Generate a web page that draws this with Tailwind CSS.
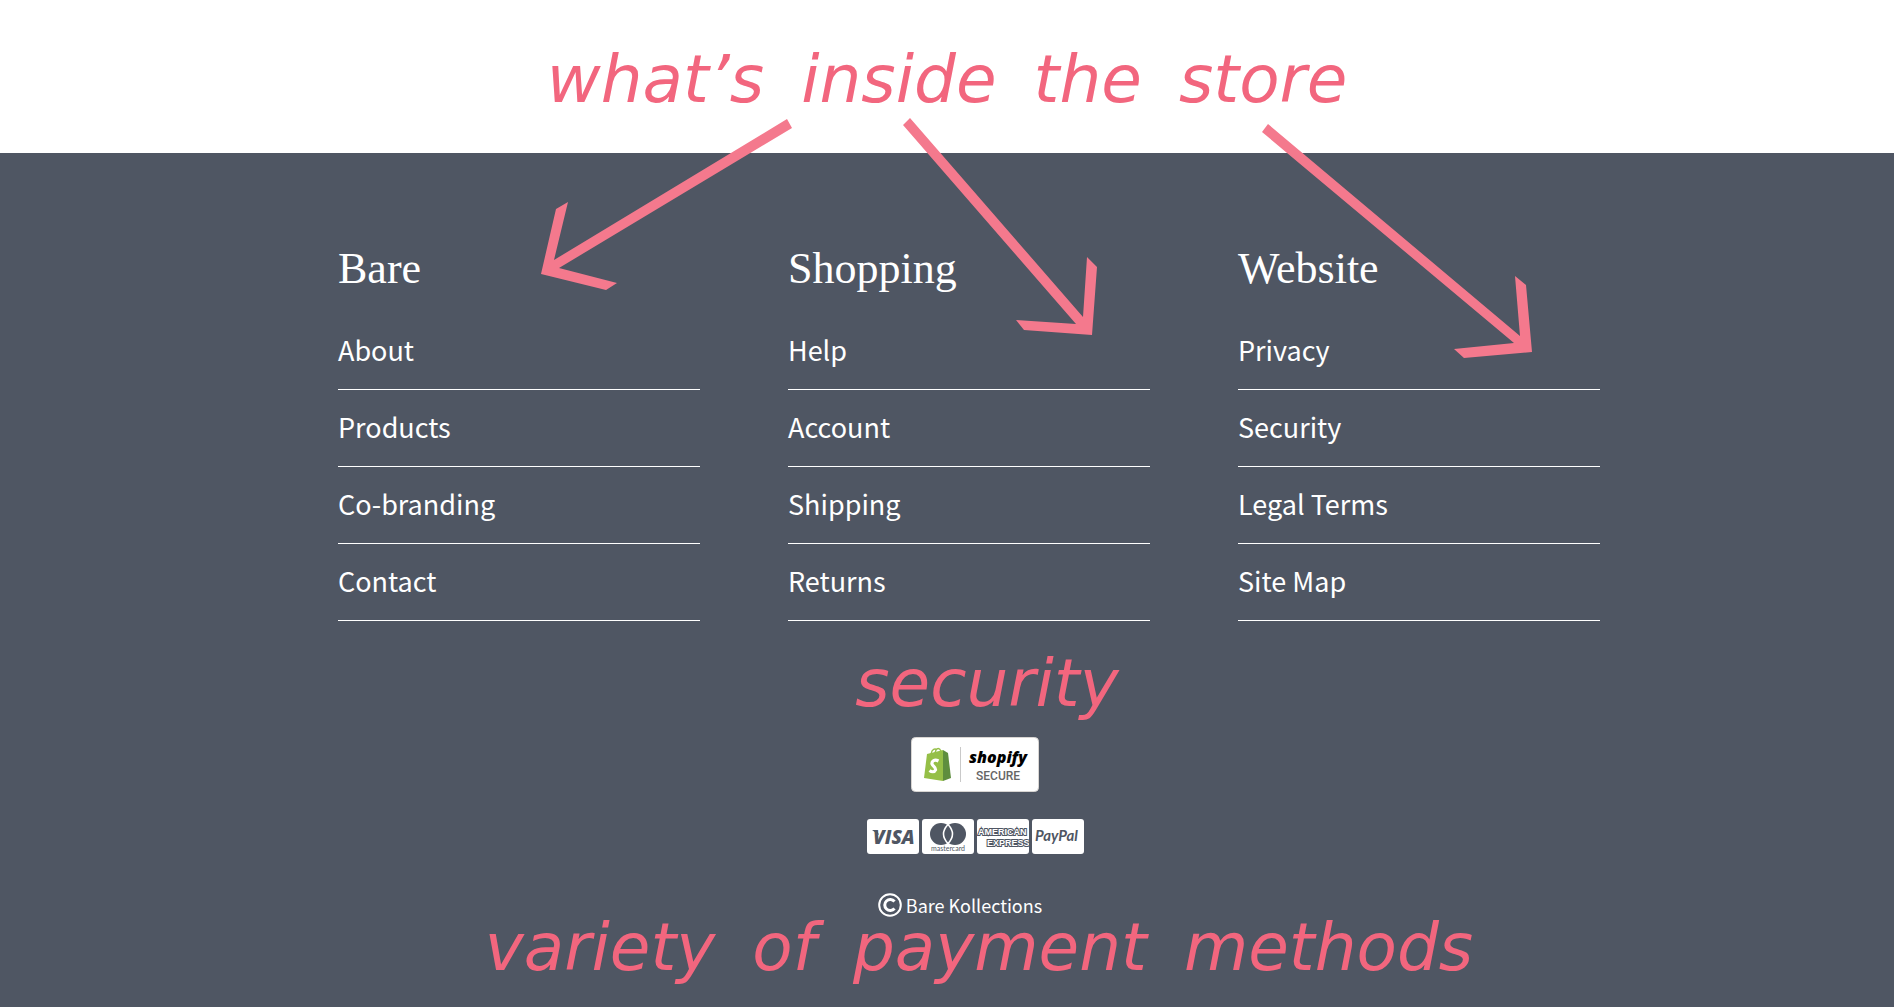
<!DOCTYPE html>
<html lang="en">
<head>
<meta charset="utf-8">
<title>Bare Kollections</title>
<script src="https://cdn.jsdelivr.net/npm/@tailwindcss/browser@4"></script>
</head>
<body class="min-h-screen overflow-x-hidden bg-[#4f5663] font-['Noto_Sans_CJK_SC',sans-serif] text-white">
<header class="flex h-[153px] justify-center bg-white pt-9">
  <h1 class="font-['DejaVu_Sans',sans-serif] text-[66px] leading-[88px] text-[#f2667e] italic"><span class="mr-4">what’s</span> <span class="mr-4">inside</span> <span class="mr-4">the</span> <span>store</span></h1>
</header>
<footer>
  <div class="pl-11">
    <div class="relative mx-auto max-w-[1262px]">
      <nav class="grid grid-cols-3 gap-x-[88px] pt-[84px]">
        <section>
          <h2 class="font-['Liberation_Serif',serif] text-[44px] leading-[64px]">Bare</h2>
          <ul class="mt-3 text-[27px] leading-[42px]">
            <li class="border-b border-white pt-4 pb-[18px]"><a href="#">About</a></li>
            <li class="border-b border-white pt-4 pb-[18px]"><a href="#">Products</a></li>
            <li class="border-b border-white pt-4 pb-[18px]"><a href="#">Co-branding</a></li>
            <li class="border-b border-white pt-4 pb-[18px]"><a href="#">Contact</a></li>
          </ul>
        </section>
        <section>
          <h2 class="font-['Liberation_Serif',serif] text-[44px] leading-[64px]">Shopping</h2>
          <ul class="mt-3 text-[27px] leading-[42px]">
            <li class="border-b border-white pt-4 pb-[18px]"><a href="#">Help</a></li>
            <li class="border-b border-white pt-4 pb-[18px]"><a href="#">Account</a></li>
            <li class="border-b border-white pt-4 pb-[18px]"><a href="#">Shipping</a></li>
            <li class="border-b border-white pt-4 pb-[18px]"><a href="#">Returns</a></li>
          </ul>
        </section>
        <section>
          <h2 class="font-['Liberation_Serif',serif] text-[44px] leading-[64px]">Website</h2>
          <ul class="mt-3 text-[27px] leading-[42px]">
            <li class="border-b border-white pt-4 pb-[18px]"><a href="#">Privacy</a></li>
            <li class="border-b border-white pt-4 pb-[18px]"><a href="#">Security</a></li>
            <li class="border-b border-white pt-4 pb-[18px]"><a href="#">Legal Terms</a></li>
            <li class="border-b border-white pt-4 pb-[18px]"><a href="#">Site Map</a></li>
          </ul>
        </section>
      </nav>
      <svg class="pointer-events-none absolute -top-[53px] left-0 w-full" viewBox="338 100 1262 270" fill="#f4798d" aria-hidden="true">
        <path d="M787 119L792 128L559 268L617 283L606 290L541 274L556 209L568 202L554 260Z"/>
        <path d="M903 125L910 118L1083 317L1087 257L1097 267L1092 335L1024 330L1016 320L1076 324Z"/>
        <path d="M1262 132L1268 124L1520 336L1515 276L1526 285L1532 352L1464 358L1454 349L1514 343Z"/>
      </svg>
    </div>
  </div>
  <h2 class="mt-[19px] pl-20 text-center font-['DejaVu_Sans',sans-serif] text-[66px] leading-[88px] text-[#f2667e] italic">security</h2>
  <div class="flex flex-col items-center pl-14">
    <svg class="mt-[9px] h-[55px] w-32" viewBox="0 0 128 55" role="img" aria-label="Shopify Secure">
      <rect x=".5" y=".5" width="127" height="54" rx="4" fill="#fff" stroke="#d8d5d2"/>
      <path d="M16 17l16-4v31l-19-3z" fill="#95bf47"/>
      <path d="M32 13l5 3 3 25-8 3z" fill="#5e8e3e"/>
      <path d="M20 17c1-5 4-6 6-4M24 16c1-5 4-6 6-2" fill="none" stroke="#95bf47" stroke-width="1.3"/>
      <path d="M27.500 24c-4-2-7 0-6.500 3 1 2.500 4 3 3.500 6-1 2.500-4 2-6 .5" fill="none" stroke="#fff" stroke-width="3.200"/>
      <path d="M49.500 10v35" stroke="#c9c9c9"/>
      <text x="58" y="26" font-family="Open Sans" font-size="16" font-weight="800" font-style="italic" fill="#000">shopify</text>
      <text x="65" y="43" font-family="Roboto" font-size="12" font-weight="500" fill="#666">SECURE</text>
    </svg>
    <div class="mt-[27px] flex gap-[3px]">
      <svg class="h-[35px] w-[52px]" viewBox="0 0 52 35"><rect width="52" height="35" rx="3" fill="#fff"/><path d="M5 11h5l2 5z" fill="#4f5663"/><text x="6" y="25" font-family="Open Sans" font-size="19" font-weight="800" font-style="italic" fill="#4f5663">VISA</text></svg>
      <svg class="h-[35px] w-[52px]" viewBox="0 0 52 35"><rect width="52" height="35" rx="3" fill="#fff"/><circle cx="19" cy="15" r="11" fill="#4f5663"/><circle cx="33" cy="15" r="11" fill="#4f5663"/><path d="M26 5.500q-9 9.500 0 19q9-9.500 0-19z" fill="#4f5663" stroke="#fff" stroke-width="1.500"/><text x="9" y="32" font-family="Lato" font-size="7" fill="#4f5663">mastercard</text></svg>
      <svg class="h-[35px] w-[52px]" viewBox="0 0 52 35"><rect width="52" height="35" rx="3" fill="#fff"/><g font-family="Liberation Sans" font-size="9" font-weight="700" fill="#fff" stroke="#4f5663" stroke-width="2" paint-order="stroke"><text x="1" y="16">AMERICAN</text><text x="10" y="27">EXPRESS</text></g></svg>
      <svg class="h-[35px] w-[52px]" viewBox="0 0 52 35"><rect width="52" height="35" rx="3" fill="#fff"/><text x="3" y="22" font-family="Lato" font-size="15" font-weight="700" font-style="italic" fill="#4f5663">PayPal</text></svg>
    </div>
  </div>
  <p class="mt-[37px] flex items-center justify-center gap-1 pl-[26px] text-[18px] leading-7">
    <svg class="size-6" viewBox="0 0 24 24" fill="none" stroke="#fff" aria-hidden="true"><circle cx="12" cy="12" r="10.800" stroke-width="2"/><path d="M16.500 8.500a5.500 5.500 0 1 0 0 7" stroke-width="3"/></svg>
    Bare Kollections
  </p>
  <h2 class="-mt-[15px] pl-16 text-center font-['DejaVu_Sans',sans-serif] text-[66px] leading-[88px] text-[#f2667e] italic"><span class="mr-4">variety</span> <span class="mr-4">of</span> <span class="mr-4">payment</span> <span>methods</span></h2>
</footer>
</body>
</html>
